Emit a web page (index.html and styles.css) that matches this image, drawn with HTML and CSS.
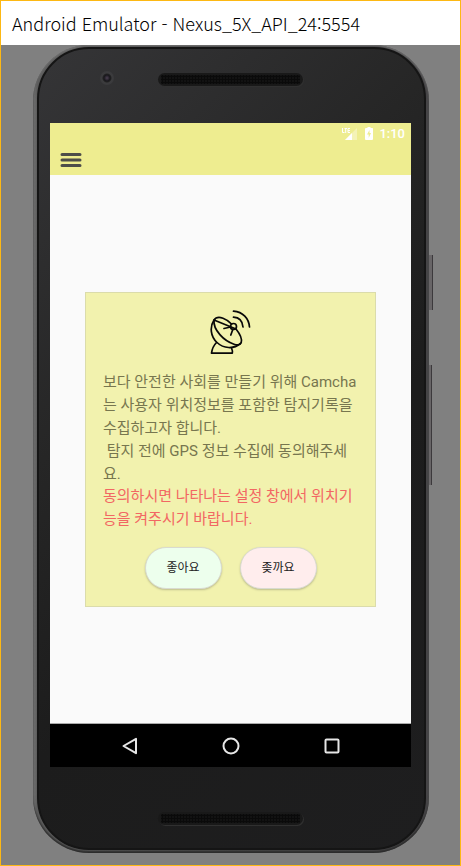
FILE: index.html
```html
<!DOCTYPE html>
<html lang="ko">
<head>
<meta charset="utf-8">
<meta name="viewport" content="width=device-width, initial-scale=1">
<title>Android Emulator - Nexus_5X_API_24:5554</title>
<link rel="stylesheet" href="styles.css">
</head>
<body>
<div class="window">
  <header class="titlebar"><h1 class="title">Android Emulator - Nexus_5X_API_24:5554</h1></header>
  <div class="stage">
    <div class="phone">
      <span class="side-key power"></span>
      <span class="side-key volume"></span>
      <div class="face">
        <div class="bezel top">
          <span class="camera"></span>
          <span class="speaker"><span class="holes"></span></span>
        </div>
        <div class="screen">
          <div class="appbar">
            <div class="status">
              <svg class="signal" width="16" height="14" viewBox="0 0 16 14" aria-hidden="true">
                <path d="M15 1V13H3Z" fill="#fff" fill-opacity=".35"/>
                <path d="M10 6V13H3Z" fill="#fff"/>
                <path d="M.5 1V5.500H2.500M2.500 1.500H5M3.700 1.500V6M8 1.500H6V5.500H8M6 3.500H8" fill="none" stroke="#fff"/>
              </svg>
              <svg class="battery" width="8" height="13" viewBox="0 0 8 13" aria-hidden="true">
                <path d="M2.500 0H5.500V1H7.500Q8 1 8 2V12Q8 13 7 13H1Q0 13 0 12V2Q0 1 1 1H2.500Z" fill="#fff"/>
                <path d="M4.500 3L2 7.500H3.700V11L6 6H4.500Z" fill="#eeed90"/>
              </svg>
              <time class="clock">1:10</time>
            </div>
            <button class="menu" type="button" aria-label="메뉴">
              <svg width="22" height="16" viewBox="0 0 22 16"><path d="M2 2.500H20M2 8H20M2 13.500H20" stroke="#4d4d49" stroke-width="3" stroke-linecap="round"/></svg>
            </button>
          </div>
          <main class="content">
            <section class="card">
              <svg class="dish" width="42" height="46" viewBox="0 0 42 46" fill="none" stroke="#080808" stroke-width="1.700" stroke-linecap="round" stroke-linejoin="round" aria-hidden="true">
                <path d="M4 10C6 7 9.500 7 13 8.200C16 9.300 19 11.200 21.500 14M26 19C30 24 32.300 29 31.200 32.500C30.500 35 27.500 35.400 24 34.200C14 31 3 20 4 10Z"/>
                <path d="M4 10C-.5 17 .5 26.500 7 32.500C13.500 38.500 23.500 39.500 30.500 33.500"/>
                <path d="M6.500 32.500C3.500 35.500 2 39.500 1.500 43.200H22.300C22.600 41.500 22.200 39.500 21.500 38"/>
                <circle cx="23.500" cy="16.500" r="3"/>
                <path d="M20.500 17L14 18.500M22.800 19.500L20.800 25"/>
                <path d="M23.500 7.200C29 7.500 32.500 11 33 17M23.500 1.200C33 2 38.800 8.500 39.500 17"/>
              </svg>
              <p class="text">보다 안전한 사회를 만들기 위해 Camcha<br>는 사용자 위치정보를 포함한 탐지기록을<br>수집하고자 합니다.<br>&nbsp;탐지 전에 GPS 정보 수집에 동의해주세<br>요.</p>
              <p class="text notice">동의하시면 나타나는 설정 창에서 위치기<br>능을 켜주시기 바랍니다.</p>
              <div class="actions">
                <button class="choice yes" type="button">좋아요</button>
                <button class="choice no" type="button">좆까요</button>
              </div>
            </section>
          </main>
          <nav class="navbar">
            <button class="key" type="button" aria-label="뒤로"><svg width="18" height="18" viewBox="0 0 18 18"><path d="M15 1.800V16.200L2.500 9Z"/></svg></button>
            <button class="key" type="button" aria-label="홈"><svg width="18" height="18" viewBox="0 0 18 18"><circle cx="9" cy="9" r="7.500"/></svg></button>
            <button class="key" type="button" aria-label="최근 앱"><svg width="18" height="18" viewBox="0 0 18 18"><rect x="2.500" y="2.500" width="13" height="13" rx="1"/></svg></button>
          </nav>
        </div>
        <div class="bezel bottom"><span class="speaker"><span class="holes"></span></span></div>
      </div>
    </div>
  </div>
</div>
</body>
</html>
```

FILE: styles.css
```css
* { box-sizing: border-box; }

body {
  margin: 0;
  font-family: Roboto, "Noto Sans CJK KR", sans-serif;
}

button {
  margin: 0;
  padding: 0;
  border: 0;
  background: none;
  font: inherit;
}

svg { display: block; }

.window {
  display: flex;
  flex-direction: column;
  min-height: 100vh;
  border: 1px solid #fdb813;
  background: #808080;
}

.titlebar {
  display: flex;
  align-items: center;
  height: 44px;
  padding: 0 11px;
  background: #fff;
}

.title {
  margin: 0;
  color: #000;
  font-family: "Noto Sans CJK KR", sans-serif;
  font-size: 18px;
  font-weight: 300;
  line-height: 24px;
  white-space: nowrap;
}

.stage {
  display: flex;
  flex: 1;
  padding: 0 31px 12px 32px;
}

.phone {
  position: relative;
  display: flex;
  flex: 1;
  padding: 2px 3px 3px 4px;
  border-radius: 56px;
  background: linear-gradient(90deg, #777 0, #5c5c5c 4px, #4a4a4a 50%, #454446 100%);
  box-shadow: inset 0 -2px 2px #2b2b2b, inset 0 1px 2px #777;
}

.side-key {
  position: absolute;
  left: 100%;
  background: #686567;
  border-right: 1px solid #3c393c;
}

.power { top: 210px; width: 4px; height: 55px; }
.volume { top: 320px; width: 3px; height: 120px; }

.face {
  display: flex;
  flex: 1;
  flex-direction: column;
  padding: 0 13px 0 11px;
  border: 2px solid #151515;
  border-radius: 52px;
  background: linear-gradient(135deg, #353537 0, #262626 35%, #1c1c1c 60%, #1e1e1f 100%);
}

.bezel {
  position: relative;
  display: flex;
  justify-content: center;
}

.top { height: 74px; padding-top: 24px; }
.bottom { flex: 1; align-items: flex-end; padding-bottom: 23px; }

.camera {
  position: absolute;
  top: 22px;
  left: 50px;
  width: 14px;
  height: 14px;
  border-radius: 50%;
  background: radial-gradient(circle, #4c4052 0, #19181d 3px, #222 4px, #3c3c3e 5px, #39393b 7px);
}

.speaker {
  width: 145px;
  height: 13px;
  padding: 2px 3px;
  border-radius: 7px;
  background: #191919;
  box-shadow: 1px 1px 0 #303030;
}

.holes {
  display: block;
  height: 9px;
  background: radial-gradient(circle, #0a0a0a 0, #0a0a0a 1px, #1e1e1e 2px) 0 0 / 3px 3px;
}

.screen {
  display: flex;
  flex-direction: column;
  min-height: 644px;
  background: #fafafa;
}

.appbar {
  height: 52px;
  background: #eeed90;
}

.status {
  display: flex;
  align-items: center;
  justify-content: flex-end;
  height: 21px;
  padding-right: 6px;
  color: #fff;
}

.battery { margin: 0 6px 0 7px; }

.clock {
  font-size: 13px;
  font-weight: 500;
  line-height: 20px;
}

.menu { display: block; padding: 8px 10px; }

.content {
  display: flex;
  flex: 1;
  align-items: center;
  justify-content: center;
  padding: 0 35px;
  border-bottom: 1px solid #aaa;
}

.card {
  flex: 1;
  padding: 17px;
  border: 1px solid #dbdcab;
  background: #f2f2ae;
}

.dish { margin: 0 auto 15px 107px; }

.text {
  margin: 0;
  color: #77764f;
  font-size: 15px;
  line-height: 23px;
  white-space: nowrap;
}

.notice {
  margin-top: -1px;
  color: #f26763;
}

.actions {
  display: flex;
  justify-content: center;
  gap: 18px;
  margin-top: 16px;
}

.choice {
  width: 77px;
  height: 42px;
  border: 1px solid #d9dbd0;
  border-radius: 21px;
  color: #222;
  font-size: 12px;
  line-height: 20px;
  box-shadow: 0 1px 2px #bdbd8c;
}

.yes { background: #edffed; }
.no { background: #ffeded; }

.navbar {
  display: flex;
  align-items: center;
  justify-content: center;
  gap: 83px;
  height: 43px;
  background: #000;
}

.key svg {
  fill: none;
  stroke: #e6e6e6;
  stroke-width: 2;
  stroke-linejoin: round;
}
```
